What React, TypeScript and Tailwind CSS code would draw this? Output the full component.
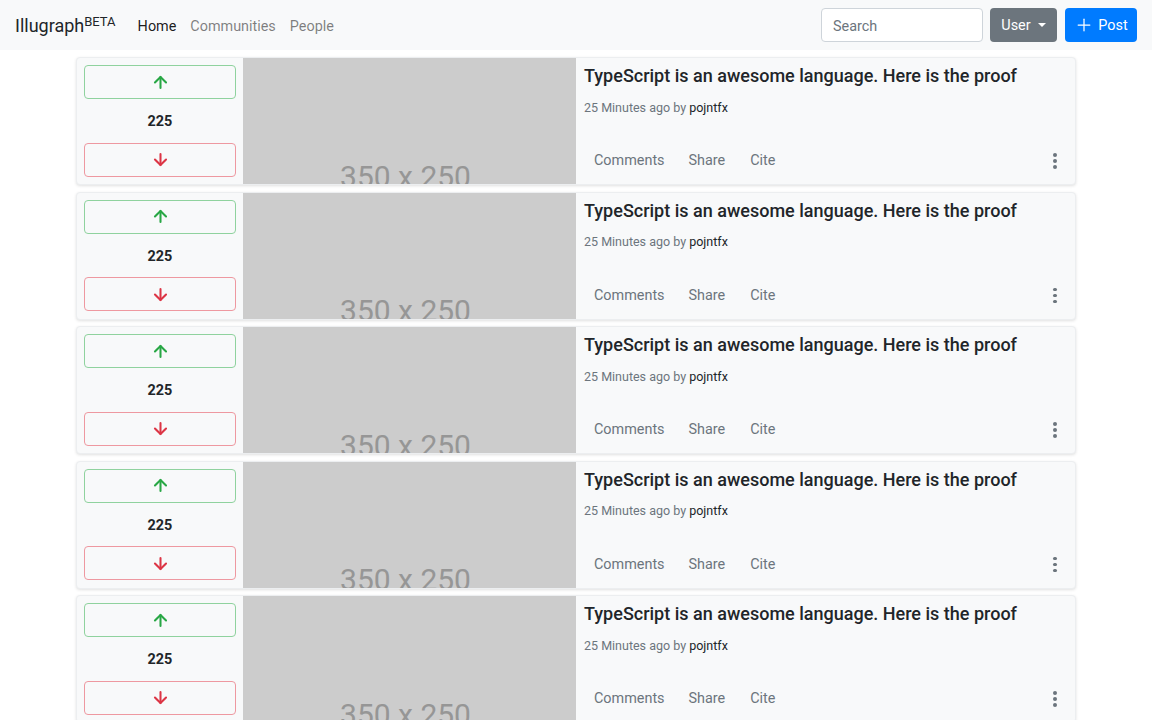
import React from 'react';
import { ArrowUp, ArrowDown, Plus } from 'lucide-react';

const posts = [1, 2, 3, 4, 5];

const PostCard: React.FC = () => (
    <div className="flex h-[128px] rounded-[4px] bg-[#f8f9fa] shadow-[0_1px_3px_rgba(0,0,0,0.12)] overflow-hidden border border-[#eceef0]">
        {/* Votes */}
        <div className="w-[166px] shrink-0 flex flex-col items-center justify-between py-[7px] px-[7px]">
            <button className="w-full h-[34px] rounded-[4px] border border-[#8fd29e] flex items-center justify-center">
                <ArrowUp className="w-[19px] h-[19px] text-[#28a745]" strokeWidth={2.6} />
            </button>
            <span className="text-[14.4px] font-bold text-[#212529] mt-[2px]">225</span>
            <button className="w-full h-[34px] rounded-[4px] border border-[#ee98a0] flex items-center justify-center">
                <ArrowDown className="w-[19px] h-[19px] text-[#dc3545]" strokeWidth={2.6} />
            </button>
        </div>

        {/* Placeholder image */}
        <div className="w-[333px] shrink-0 bg-[#cccccc] overflow-hidden">
            <div className="h-[236px] flex items-center justify-center text-[30px] text-[#969696] pr-[8px]">
                350 x 250
            </div>
        </div>

        {/* Body */}
        <div className="flex-1 flex flex-col pl-[8px] pr-[12px] pt-[5px] pb-[6px]">
            <h5 className="text-[18px] font-medium text-[#212529] leading-[1.2] mt-[2px]">
                TypeScript is an awesome language. Here is the proof
            </h5>
            <p className="text-[12.5px] text-[#6c757d] mt-[12px]">
                25 Minutes ago by <span className="text-[#212529]">pojntfx</span>
            </p>
            <div className="mt-auto flex items-center">
                <button className="px-[10px] py-[6px] text-[14.4px] text-[#6c757d]">Comments</button>
                <button className="px-[12px] py-[6px] ml-[2px] text-[14.4px] text-[#6c757d]">Share</button>
                <button className="px-[12px] py-[6px] ml-[1px] text-[14.4px] text-[#6c757d]">Cite</button>
                <button className="ml-auto w-[16px] h-[24px] flex flex-col items-center justify-center gap-[2.5px]">
                    <span className="w-[3.5px] h-[3.5px] rounded-full bg-[#6c757d]" />
                    <span className="w-[3.5px] h-[3.5px] rounded-full bg-[#6c757d]" />
                    <span className="w-[3.5px] h-[3.5px] rounded-full bg-[#6c757d]" />
                </button>
            </div>
        </div>
    </div>
);

const App: React.FC = () => {
    return (
        <div className="min-h-screen bg-white font-['Roboto',sans-serif]">
            <nav className="h-[50px] bg-[#f8f9fa] flex items-center px-[15px]">
                <a className="text-[18px] text-[#212529] mr-[22px] mt-[1px]">
                    Illugraph<span className="text-[13px] relative -top-[6px]">BETA</span>
                </a>
                <div className="flex items-center gap-[14px] text-[14.4px] mt-[3px]">
                    <span className="text-[rgba(0,0,0,0.9)]">Home</span>
                    <span className="text-[rgba(0,0,0,0.5)]">Communities</span>
                    <span className="text-[rgba(0,0,0,0.5)]">People</span>
                </div>
                <div className="ml-auto flex items-center">
                    <input
                        placeholder="Search"
                        className="w-[162px] h-[34px] rounded-[4px] border border-[#ced4da] bg-white px-[11px] pt-[2px] text-[14.4px] placeholder-[#6c757d] outline-none"
                    />
                    <button className="ml-[7px] h-[34px] w-[67px] rounded-[4px] bg-[#6c757d] text-white text-[14.4px] flex items-center justify-center gap-[7px] pt-[2px]">
                        User
                        <span className="w-0 h-0 border-l-[4px] border-r-[4px] border-t-[4px] border-l-transparent border-r-transparent border-t-white -mt-[2px]" />
                    </button>
                    <button className="ml-[8px] h-[34px] w-[72px] rounded-[4px] bg-[#007bff] text-white text-[14.4px] flex items-center justify-center gap-[4px] pt-[2px]">
                        <Plus className="w-[20px] h-[20px] -mt-[2px]" strokeWidth={1.5} />
                        Post
                    </button>
                </div>
            </nav>

            <main className="w-[1000px] mx-auto pt-[7px] flex flex-col gap-[6.5px]">
                {posts.map(p => (
                    <PostCard key={p} />
                ))}
            </main>
        </div>
    );
};

export default App;
